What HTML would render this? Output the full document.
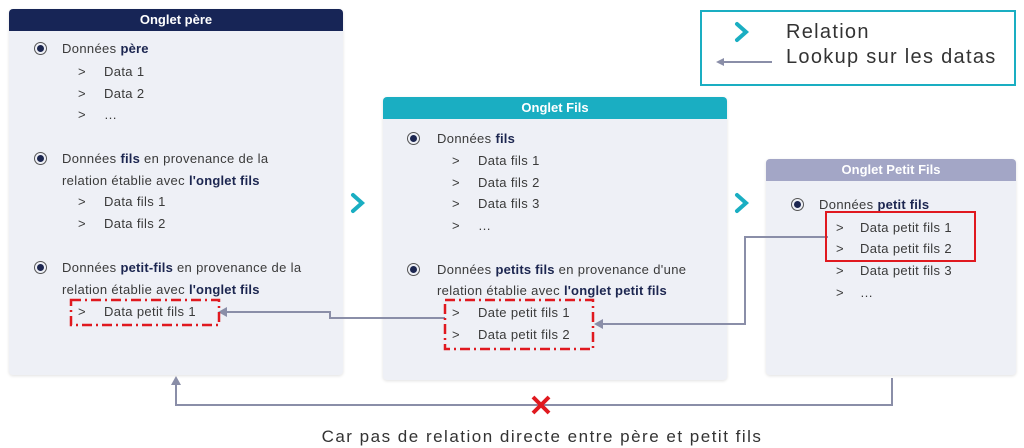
<!DOCTYPE html>
<html><head><meta charset="utf-8"><style>
body{margin:0;width:1024px;height:447px;background:#fff;position:relative;overflow:hidden;font-family:"Liberation Sans",sans-serif;color:#3a3a3a}
.box{position:absolute;background:#eef0f6;border-radius:4px;box-shadow:0 1px 3px rgba(0,0,0,.12)}
.hd{height:22px;line-height:22px;text-align:center;color:#fff;font-weight:bold;font-size:13px;border-radius:4px 4px 0 0}
.t{position:absolute;font-size:13px;white-space:nowrap;line-height:16px;letter-spacing:0.35px}
.t b{color:#1c2650;letter-spacing:0.2px}
.bl{position:absolute;width:7px;height:7px;border-radius:50%;background:#1c2650;box-shadow:0 0 0 2px #eef0f6,0 0 0 3px #555}
svg{position:absolute;left:0;top:0}
</style></head><body>
<div class="box" style="left:9px;top:9px;width:334px;height:366px"><div class="hd" style="background:#172556">Onglet père</div></div>
<div class="box" style="left:383px;top:97px;width:344px;height:283px"><div class="hd" style="background:#1aaec2">Onglet Fils</div></div>
<div class="box" style="left:766px;top:159px;width:250px;height:216px"><div class="hd" style="background:#a3a6c6">Onglet Petit Fils</div></div>
<div style="position:absolute;left:700px;top:10px;width:312px;height:72px;border:2px solid #1aaec2"></div>
<div class="t" style="left:786px;top:20px;font-size:20px;line-height:24px;letter-spacing:1.3px;color:#333">Relation</div>
<div class="t" style="left:786px;top:45px;font-size:20px;line-height:24px;letter-spacing:1.3px;color:#333">Lookup sur les datas</div>

<!-- père -->
<div class="bl" style="left:37px;top:45px"></div><div class="t" style="left:62px;top:41px">Données <b>père</b></div>
<div class="t" style="left:78px;top:64px">&gt;</div><div class="t" style="left:104px;top:64px">Data 1</div>
<div class="t" style="left:78px;top:86px">&gt;</div><div class="t" style="left:104px;top:86px">Data 2</div>
<div class="t" style="left:78px;top:107px">&gt;</div><div class="t" style="left:104px;top:107px">…</div>
<div class="bl" style="left:37px;top:155px"></div><div class="t" style="left:62px;top:151px">Données <b>fils</b> en provenance de la</div>
<div class="t" style="left:62px;top:173px">relation établie avec <b>l'onglet fils</b></div>
<div class="t" style="left:78px;top:194px">&gt;</div><div class="t" style="left:104px;top:194px">Data fils 1</div>
<div class="t" style="left:78px;top:216px">&gt;</div><div class="t" style="left:104px;top:216px">Data fils 2</div>
<div class="bl" style="left:37px;top:264px"></div><div class="t" style="left:62px;top:260px">Données <b>petit-fils</b> en provenance de la</div>
<div class="t" style="left:62px;top:282px">relation établie avec <b>l'onglet fils</b></div>
<div class="t" style="left:78px;top:304px">&gt;</div><div class="t" style="left:104px;top:304px">Data petit fils 1</div>

<!-- fils -->
<div class="bl" style="left:410px;top:135px"></div><div class="t" style="left:437px;top:131px">Données <b>fils</b></div>
<div class="t" style="left:452px;top:153px">&gt;</div><div class="t" style="left:478px;top:153px">Data fils 1</div>
<div class="t" style="left:452px;top:175px">&gt;</div><div class="t" style="left:478px;top:175px">Data fils 2</div>
<div class="t" style="left:452px;top:196px">&gt;</div><div class="t" style="left:478px;top:196px">Data fils 3</div>
<div class="t" style="left:452px;top:218px">&gt;</div><div class="t" style="left:478px;top:218px">…</div>
<div class="bl" style="left:410px;top:266px"></div><div class="t" style="left:437px;top:262px">Données <b>petits fils</b> en provenance d'une</div>
<div class="t" style="left:437px;top:283px">relation établie avec <b>l'onglet petit fils</b></div>
<div class="t" style="left:452px;top:305px">&gt;</div><div class="t" style="left:478px;top:305px">Date petit fils 1</div>
<div class="t" style="left:452px;top:327px">&gt;</div><div class="t" style="left:478px;top:327px">Data petit fils 2</div>

<!-- petit fils -->
<div class="bl" style="left:794px;top:201px"></div><div class="t" style="left:819px;top:197px">Données <b>petit fils</b></div>
<div class="t" style="left:836px;top:220px">&gt;</div><div class="t" style="left:860px;top:220px">Data petit fils 1</div>
<div class="t" style="left:836px;top:241px">&gt;</div><div class="t" style="left:860px;top:241px">Data petit fils 2</div>
<div class="t" style="left:836px;top:263px">&gt;</div><div class="t" style="left:860px;top:263px">Data petit fils 3</div>
<div class="t" style="left:836px;top:285px">&gt;</div><div class="t" style="left:860px;top:285px">…</div>

<div class="t" style="left:0;width:1084px;text-align:center;top:426px;font-size:17px;line-height:22px;letter-spacing:1.5px;color:#333">Car pas de relation directe entre père et petit fils</div>

<svg width="1024" height="447">
<g fill="none" stroke-width="4" stroke="#1aaec2" stroke-linecap="round">
<polyline points="353,195 362,203 353,211"/><polyline points="737,195 746,203 737,211"/><polyline points="737,24 746,32 737,40"/>
</g>
<g fill="none" stroke="#8a8ea8" stroke-width="2">
<line x1="722" y1="62" x2="772" y2="62"/><polyline points="828,237 745,237 745,324 600,324"/>
<polyline points="445,318 330,318 330,312 224,312"/>
<polyline points="892,378 892,405 176,405 176,382"/>
</g>
<g fill="#8a8ea8"><polygon points="716,62 724,58 724,66"/><polygon points="594,324 603,319 603,329"/><polygon points="218,312 227,307 227,317"/><polygon points="176,376 171,385 181,385"/></g>
<rect x="826" y="212" width="149" height="49" fill="none" stroke="#e0191f" stroke-width="2"/>
<g fill="none" stroke="#e0191f" stroke-width="2.5" stroke-dasharray="10,4,2,4">
<rect x="71" y="300" width="148" height="25"/><rect x="445" y="300" width="148" height="49"/>
</g>
<g stroke="#e0191f" stroke-width="4"><line x1="533" y1="397" x2="549" y2="413"/><line x1="549" y1="397" x2="533" y2="413"/></g>
</svg>
</body></html>
